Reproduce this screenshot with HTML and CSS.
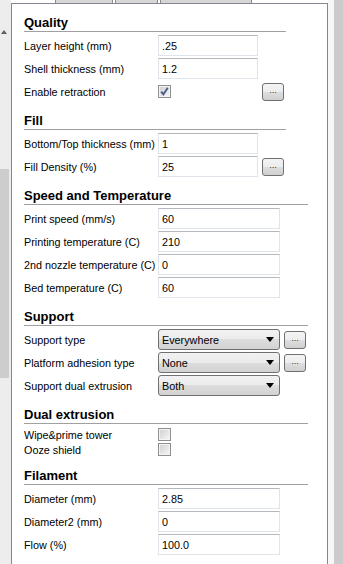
FILE: index.html
```html
<!DOCTYPE html>
<html lang="en">
<head>
    <meta charset="UTF-8">
    <title>Print settings</title>
    <link rel="stylesheet" href="styles.css">
</head>
<body>
    <div class="window">
        <div class="scroll-left">
            <div class="arrow"></div>
            <div class="thumb"></div>
        </div>

        <div class="main">
            <div class="tabs">
                <span class="tab tab-1"></span>
                <span class="tab tab-2"></span>
                <span class="tab tab-3"></span>
            </div>

            <div class="panel">
                <!-- Quality -->
                <div class="section narrow">
                    <h2>Quality</h2>
                    <div class="row">
                        <label>Layer height (mm)</label>
                        <input class="field" type="text" value=".25">
                    </div>
                    <div class="row">
                        <label>Shell thickness (mm)</label>
                        <input class="field" type="text" value="1.2">
                    </div>
                    <div class="row">
                        <label>Enable retraction</label>
                        <span class="check checked">
                            <svg width="11" height="11" viewBox="0 0 11 11"><path d="M2.2 5.6 L4.4 8.3 L8.8 1.8" fill="none" stroke="#4a5c8e" stroke-width="1.9"/></svg>
                        </span>
                        <span class="more">...</span>
                    </div>
                </div>

                <!-- Fill -->
                <div class="section narrow">
                    <h2>Fill</h2>
                    <div class="row">
                        <label>Bottom/Top thickness (mm)</label>
                        <input class="field" type="text" value="1">
                    </div>
                    <div class="row">
                        <label>Fill Density (%)</label>
                        <input class="field" type="text" value="25">
                        <span class="more">...</span>
                    </div>
                </div>

                <!-- Speed and Temperature -->
                <div class="section">
                    <h2>Speed and Temperature</h2>
                    <div class="row">
                        <label>Print speed (mm/s)</label>
                        <input class="field" type="text" value="60">
                    </div>
                    <div class="row">
                        <label>Printing temperature (C)</label>
                        <input class="field" type="text" value="210">
                    </div>
                    <div class="row">
                        <label>2nd nozzle temperature (C)</label>
                        <input class="field" type="text" value="0">
                    </div>
                    <div class="row">
                        <label>Bed temperature (C)</label>
                        <input class="field" type="text" value="60">
                    </div>
                </div>

                <!-- Support -->
                <div class="section">
                    <h2>Support</h2>
                    <div class="row">
                        <label>Support type</label>
                        <div class="select"><span>Everywhere</span><i class="caret"></i></div>
                        <span class="more">...</span>
                    </div>
                    <div class="row">
                        <label>Platform adhesion type</label>
                        <div class="select"><span>None</span><i class="caret"></i></div>
                        <span class="more">...</span>
                    </div>
                    <div class="row">
                        <label>Support dual extrusion</label>
                        <div class="select"><span>Both</span><i class="caret"></i></div>
                    </div>
                </div>

                <!-- Dual extrusion -->
                <div class="section">
                    <h2>Dual extrusion</h2>
                    <div class="row compact">
                        <label>Wipe&amp;prime tower</label>
                        <span class="check"></span>
                    </div>
                    <div class="row compact">
                        <label>Ooze shield</label>
                        <span class="check"></span>
                    </div>
                </div>

                <!-- Filament -->
                <div class="section">
                    <h2>Filament</h2>
                    <div class="row">
                        <label>Diameter (mm)</label>
                        <input class="field" type="text" value="2.85">
                    </div>
                    <div class="row">
                        <label>Diameter2 (mm)</label>
                        <input class="field" type="text" value="0">
                    </div>
                    <div class="row">
                        <label>Flow (%)</label>
                        <input class="field" type="text" value="100.0">
                    </div>
                </div>
            </div>
        </div>

        <div class="edge-right"></div>
    </div>
</body>
</html>
```

FILE: styles.css
```css
body {
    margin: 0;
    padding: 0;
    background-color: #fff;
    color: #000;
    font-family: "Liberation Sans", Arial, sans-serif;
    font-size: 10.8px;
}

.window {
    display: flex;
    height: 564px;
    overflow: hidden;
}

/* left scroll strip */
.scroll-left {
    flex: none;
    width: 11px;
    display: flex;
    flex-direction: column;
    background-color: #ededed;
}

.scroll-left .arrow {
    margin: 30px 0 0 1px;
    width: 0;
    height: 0;
    border-left: 3px solid transparent;
    border-right: 3px solid transparent;
    border-bottom: 4px solid #606060;
}

.scroll-left .thumb {
    margin-top: 135px;
    width: 9px;
    height: 209px;
    background-color: #cdcdcd;
}

.main {
    flex: none;
    width: 317px;
    display: flex;
    flex-direction: column;
}

.tabs {
    height: 3px;
    display: flex;
    gap: 2px;
    padding-left: 44px;
}

.tab {
    box-sizing: border-box;
    background-color: #d6d6d6;
    border-left: 1px solid #8c8c8c;
    border-right: 1px solid #8c8c8c;
}

.tab-1 { width: 58px; }
.tab-2 { width: 43px; }
.tab-3 { width: 92px; }

.panel {
    flex: 1;
    border: 1px solid #828790;
    border-bottom: none;
    padding: 0 19px 0 12px;
    background-color: #fff;
}

.edge-right {
    flex: none;
    width: 15px;
    background: linear-gradient(to right, #f7f7f7 6px, #cbcbcb 6px);
}

/* sections */
.section h2 {
    margin: 11px 0 3px;
    font-size: 13px;
    line-height: 16px;
    font-weight: bold;
    border-bottom: 1px solid #a0a0a0;
}

.section.narrow h2 {
    margin-right: 22px;
}

.row {
    display: grid;
    grid-template-columns: 130px 122px auto;
    column-gap: 4px;
    align-items: center;
    height: 21px;
    margin-bottom: 2px;
}

.narrow .row {
    grid-template-columns: 130px 100px auto;
}

.row.compact {
    height: 15px;
    margin-bottom: 0;
}

.row label {
    white-space: nowrap;
}

.field {
    display: block;
    box-sizing: border-box;
    width: 100%;
    height: 21px;
    margin: 0;
    padding: 0 3px;
    border: 1px solid #dfe3ea;
    border-top-color: #b4b7bd;
    background-color: #fff;
    font-family: "Liberation Sans", Arial, sans-serif;
    font-size: 10.8px;
    color: #000;
    outline: none;
}

.select {
    box-sizing: border-box;
    height: 21px;
    display: flex;
    align-items: center;
    justify-content: space-between;
    padding: 0 5px 0 3px;
    border: 1px solid #707070;
    border-radius: 3px;
    background: linear-gradient(#f2f2f2, #ebebeb 50%, #dddddd 50%, #d2d2d2);
}

.caret {
    width: 0;
    height: 0;
    border-left: 4px solid transparent;
    border-right: 4px solid transparent;
    border-top: 5px solid #000;
}

.more {
    box-sizing: border-box;
    width: 22px;
    height: 18px;
    display: flex;
    align-items: center;
    justify-content: center;
    padding-bottom: 3px;
    border: 1px solid #707070;
    border-radius: 3px;
    background: linear-gradient(#f4f4f4, #ececec 50%, #dedede 50%, #d0d0d0);
    font-size: 9px;
    color: #333;
}

.check {
    box-sizing: border-box;
    width: 13px;
    height: 13px;
    display: flex;
    align-items: center;
    justify-content: center;
    border: 1px solid #8e8f8f;
    box-shadow: inset 0 0 0 1px #f4f4f4;
    background: linear-gradient(135deg, #cfcfcf, #f7f7f7);
}
```
